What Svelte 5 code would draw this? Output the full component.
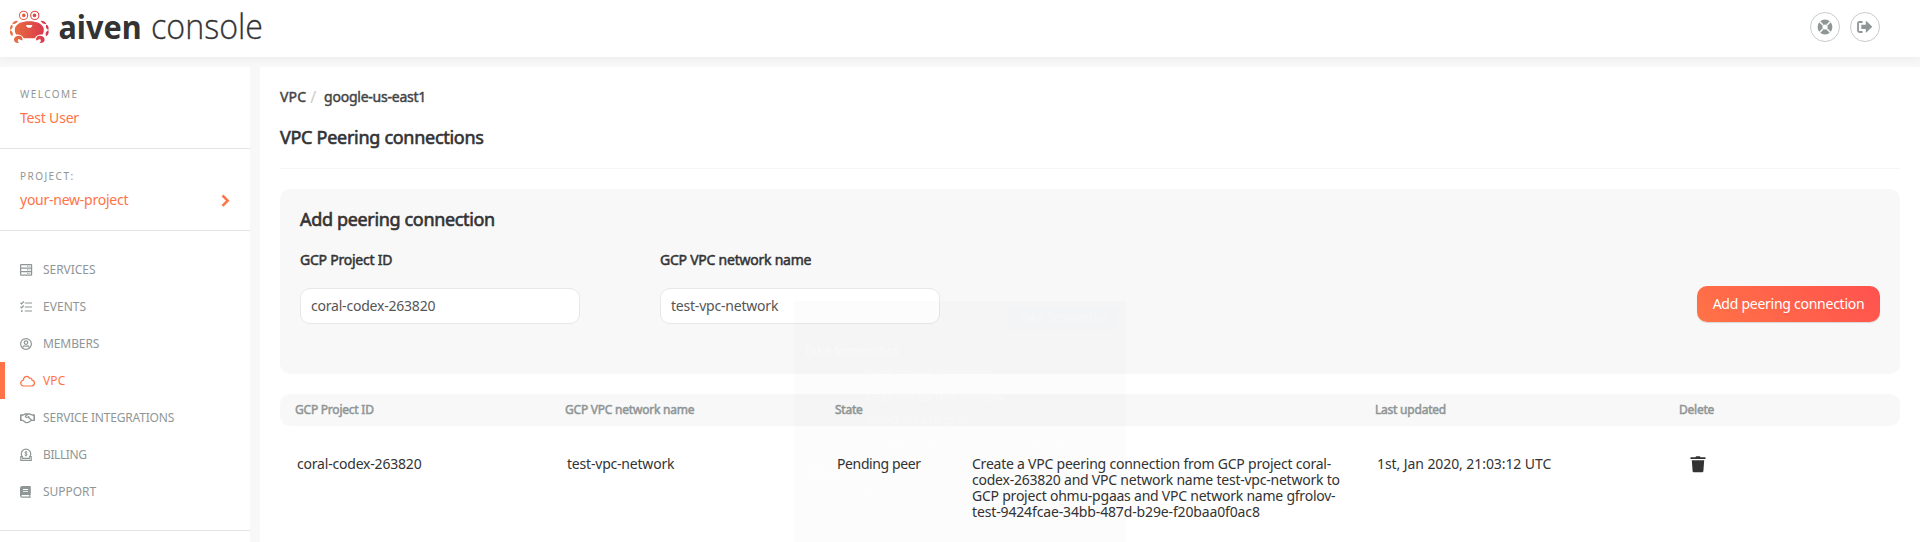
<script>
  const nav = [
    { icon: 'services', label: 'SERVICES', tracking: -0.05 },
    { icon: 'events', label: 'EVENTS', tracking: 0.05 },
    { icon: 'members', label: 'MEMBERS', tracking: -0.1 },
    { icon: 'vpc', label: 'VPC', tracking: 0.1, active: true },
    { icon: 'integrations', label: 'SERVICE INTEGRATIONS', tracking: -0.18 },
    { icon: 'billing', label: 'BILLING', tracking: -0.4 },
    { icon: 'support', label: 'SUPPORT', tracking: -0.05 }
  ];
  let projectId = $state('coral-codex-263820');
  let network = $state('test-vpc-network');
</script>

<div class="page">
  <header>
    <svg class="logo" width="300" height="57" viewBox="0 0 300 57">
      <defs>
        <linearGradient id="crab" x1="10" y1="0" x2="49" y2="0" gradientUnits="userSpaceOnUse">
          <stop offset="0" stop-color="#e8743f" />
          <stop offset="1" stop-color="#d9304f" />
        </linearGradient>
      </defs>
      <g fill="none" stroke="url(#crab)">
        <circle cx="23.6" cy="15.4" r="4.100" stroke-width="1.100" />
        <circle cx="34.8" cy="15.4" r="4.100" stroke-width="1.100" />
      </g>
      <g fill="url(#crab)">
        <circle cx="23.8" cy="15.4" r="1.800" />
        <circle cx="34.5" cy="15.4" r="1.800" />
        <path d="M15 28C17 23.300 22 21.300 29.300 21.300S41.600 23.300 43.600 28C44.100 31 43.600 33.200 42.100 34.700C39 34.300 36.300 35.500 34.800 38.200H23.800C22.200 35.500 19.500 34.300 16.500 34.700C15 33.200 14.500 31 15 28Z" />
        <path d="M18 20.800C15.600 20.400 13.400 21.500 12.300 23.900C14.600 24.500 17 23.200 18 20.800ZM12.300 24.500C10.500 25.400 9.600 27.300 10.200 29.900C12.400 29 13.300 26.700 12.300 24.500ZM10.300 30.300C9.300 32.500 10.200 35 12.400 36.200C13.600 34 12.500 31.300 10.300 30.300ZM40.600 20.800C43 20.400 45.200 21.500 46.300 23.900C44 24.500 41.600 23.200 40.600 20.800ZM46.300 24.500C48.100 25.400 49 27.300 48.400 29.900C46.200 29 45.300 26.700 46.300 24.500ZM48.300 30.300C49.300 32.500 48.400 35 46.200 36.200C45 34 46.100 31.300 48.300 30.300Z" />
        <path d="M19.500 35.700C15.500 35.100 13.400 38.300 14.200 40.800C14.900 42.700 17 43.400 19.200 42.900C17.400 41.800 17.300 40 18.500 38.900L22.300 40.500C23.100 38.300 21.700 36.100 19.500 35.700ZM39.100 35.700C43.100 35.100 45.200 38.300 44.400 40.800C43.700 42.700 41.600 43.400 39.400 42.900C41.200 41.800 41.300 40 40.100 38.900L36.300 40.500C35.500 38.300 36.900 36.100 39.100 35.700Z" />
      </g>
      <path d="M26 24.900H32.400C32 28.700 26.400 28.700 26 24.900Z" fill="#fff" />
      <text class="brand" x="58.500" y="38.500" textLength="83" lengthAdjust="spacingAndGlyphs">aiven</text>
      <text class="product" x="151" y="38.500" textLength="112" lengthAdjust="spacingAndGlyphs">console</text>
    </svg>
    <div class="actions">
      <button class="round" aria-label="Help">
        <svg width="16" height="16" viewBox="0 0 16 16">
          <circle cx="8" cy="8" r="5" fill="none" stroke="#8f9696" stroke-width="4.800" />
          <path d="M3 3L5.700 5.700M13 3L10.300 5.700M3 13L5.700 10.300M13 13L10.300 10.300" stroke="#fff" stroke-width="1.500" stroke-linecap="round" />
        </svg>
      </button>
      <button class="round" aria-label="Sign out">
        <svg width="16" height="14" viewBox="0 0 16 14">
          <path d="M5.500 2H2.500Q1 2 1 3.500V10.500Q1 12 2.500 12H5.500" fill="none" stroke="#8f9696" stroke-width="1.800" />
          <path d="M4.300 4.800H8.800V1.200Q9.100.9 9.600 1.200L15.300 6.700L9.600 12.200Q9.100 12.600 8.800 12.200V9H4.300Z" fill="#8f9696" />
        </svg>
      </button>
    </div>
  </header>

  <div class="body">
    <aside>
      <section>
        <div class="eyebrow">WELCOME</div>
        <a class="link" href="#user">Test User</a>
      </section>
      <section>
        <div class="eyebrow">PROJECT:</div>
        <a class="link row" href="#project">
          <span class="projname">your-new-project</span>
          <svg width="9" height="13" viewBox="0 0 9 13"><path d="M1.500 1.500L6.700 6.700L1.500 11.900" fill="none" stroke="#ff7346" stroke-width="2.500" /></svg>
        </a>
      </section>
      <nav>
        {#each nav as item}
          <a class="item" class:active={item.active} href="#{item.icon}">
            <svg class="ico" width="16" height="14" viewBox="0 0 16 14" fill="none" stroke="currentColor" stroke-width="1.200">
              {#if item.icon === 'services'}
                <rect x=".6" y="1.600" width="11" height="10.600" rx=".5" />
                <path d="M.6 5.100H11.600M.6 8.700H11.600" />
                <path d="M7 3.400H10.500M7 6.900H10.500M7 10.400H10.500" stroke-dasharray="1 .6" opacity=".75" />
              {:else if item.icon === 'events'}
                <path d="M4.800 3H12M4.800 7H12M4.800 11H12M.5 2.800L1.600 3.800L3.800 1.500M.5 6.800L1.600 7.800L3.800 5.500" />
                <circle cx="1.800" cy="11" r=".9" fill="currentColor" stroke="none" />
              {:else if item.icon === 'members'}
                <circle cx="6" cy="7" r="5.400" /><circle cx="6" cy="5.600" r="1.800" />
                <path d="M2.500 10.800C3.200 9 4.500 8.700 6 9.200C7.500 8.700 8.800 9 9.500 10.800" />
              {:else if item.icon === 'vpc'}
                <path d="M3.800 12H11.500C15.500 11.500 15.300 6.800 12 6.200C11.900 4.300 10.600 3.800 9.500 4.300C7.800 1.100 3.300 2.300 3.500 6C-.3 7-.2 11.700 3.800 12Z" />
              {:else if item.icon === 'integrations'}
                <path d="M.8 3.600V9.900M14.200 3.600V9.900" stroke-width="1.600" />
                <path d="M1 4H3L5.200 3H9.600L12.400 4H14M1 9.300H2.700L5.600 11.300Q7.500 12 9 11L11.500 9.300H14M8 3L5.400 5.200Q5.600 7.100 8 6L11.800 9.200M8.100 6.100L9.200 5.200" stroke-width="1.300" />
              {:else if item.icon === 'billing'}
                <path d="M3 9.500A4.700 4.700 0 1 1 9 9.500M2.200 8.700H.8V12.300H11.200V8.700H9.800M2 10.300H10" />
                <path d="M7.400 4.300Q6 3.300 4.900 4.300C4.200 5.900 7.700 5.300 7.200 7Q5.900 8.100 4.600 7M6 3V8.400" stroke-width=".9" />
              {:else}
                <path fill="currentColor" stroke="none" fill-rule="evenodd" d="M2.200 1H10Q10.800 1 10.800 1.800V9.300Q10.800 9.800 10.400 10V11.700Q10.800 11.900 10.800 12.300Q10.800 12.800 10.300 12.800H2.200Q0 12.800 0 10.600V3.200Q0 1 2.200 1ZM3 4V4.900H8V4ZM3 5.900V6.700H8V5.900ZM2.200 10.100Q1.500 10.300 1.500 10.900T2.200 11.600H9.200V10.100Z" />
              {/if}
            </svg>
            <span style="letter-spacing: {item.tracking}px">{item.label}</span>
          </a>
        {/each}
      </nav>
    </aside>

    <main>
      <div class="crumbs"><a class="root" href="#vpc">VPC</a><i>/</i><a class="current" href="#region">google-us-east1</a></div>
      <h1>VPC Peering connections</h1>
      <form class="card">
        <h2>Add peering connection</h2>
        <div class="fields">
          <label><span>GCP Project ID</span><input bind:value={projectId} /></label>
          <label><span>GCP VPC network name</span><input bind:value={network} /></label>
          <button type="button" class="primary">Add peering connection</button>
        </div>
      </form>
      <div class="cols head">
        <span>GCP Project ID</span><span>GCP VPC network name</span><span>State</span><span></span><span>Last updated</span><span>Delete</span>
      </div>
      <div class="cols data">
        <span>coral-codex-263820</span>
        <span>test-vpc-network</span>
        <span class="state">Pending peer</span>
        <span class="desc">Create a VPC peering connection from GCP project coral-<br />codex-263820 and VPC network name test-vpc-network to<br />GCP project ohmu-pgaas and VPC network name gfrolov-<br /><span class="hash">test-9424fcae-34bb-487d-b29e-f20baa0f0ac8</span></span>
        <span class="date">1st, Jan 2020, 21:03:12 UTC</span>
        <span class="trash">
          <svg width="16" height="17" viewBox="0 0 16 17" fill="#333"><path d="M.5 1.300H5.500Q5.700.2 6.500.2H9.500Q10.300.2 10.500 1.300H15.500V3H.5ZM1.800 4.200H14.200L13.400 15Q13.300 16.200 12.200 16.200H3.800Q2.700 16.200 2.600 15Z" /></svg>
        </span>
      </div>
    </main>
  </div>

  <div class="ghost" aria-hidden="true">
    <div class="take">Take Screenshot</div>
    <b>Take Screenshot</b>
    <p class="opt">Grab the whole screen</p>
    <p class="opt">Grab the current window</p>
    <p class="opt">Select area to grab</p>
    <p class="delay"><span>Grab after a delay of</span><span>0</span><span class="step">−</span><span>+</span><span>seconds</span></p>
    <b class="effects">Effects</b>
    <p class="include">Include pointer</p>
  </div>
</div>

<style>
  :global(body) { margin: 0; overflow: hidden; }
  .page {
    position: relative; width: 1920px; height: 542px; overflow: hidden;
    display: flex; flex-direction: column; background: #f8f8f8; color: #333;
    font: 14px/16px "Noto Sans", "Open Sans", sans-serif; letter-spacing: -.2px;
  }
  .page * { box-sizing: border-box; }
  a { color: inherit; text-decoration: none; }
  header { height: 57px; flex: none; background: #fff; display: flex; justify-content: space-between; box-shadow: 0 0 10px rgba(0, 0, 0, .07); }
  .logo { overflow: visible; }
  .brand { font-size: 33px; font-weight: 700; fill: #333; letter-spacing: 0; }
  .product { font-family: "Open Sans", "Noto Sans", sans-serif; font-size: 35px; font-weight: 300; fill: #333; letter-spacing: 0; stroke: #333; stroke-width: .3px; }
  .actions { display: flex; gap: 10px; padding: 12px 40px 0 0; }
  .round { width: 30px; height: 30px; padding: 0; border: 1px solid #c9cccc; border-radius: 50%; background: #fff; display: flex; align-items: center; justify-content: center; }
  .body { flex: 1; min-height: 0; margin-top: 10px; display: flex; gap: 10px; }
  aside { width: 250px; flex: none; background: #fff; }
  section { height: 82px; padding: 20px 20px 0; border-bottom: 1px solid #e3e5e5; }
  .eyebrow { font-size: 10px; line-height: 15px; letter-spacing: 1.450px; color: #8f9696; }
  .link { display: block; margin-top: 7px; line-height: 18px; color: #ff7346; }
  .row { display: flex; justify-content: space-between; align-items: center; }
  .projname { letter-spacing: -.25px; }
  nav { padding: 20px 0; border-bottom: 1px solid #e3e5e5; }
  .item { height: 37px; padding-left: 15px; border-left: 5px solid transparent; display: flex; align-items: center; gap: 7px; font-size: 12px; color: #8f9696; }
  .item.active { border-left-color: #ff7346; color: #ff7346; }
  .ico { flex: none; }

  main { flex: 1; background: #fff; padding: 20px 20px 0; }
  .crumbs { height: 20px; line-height: 20px; display: flex; color: #444; -webkit-text-stroke: .45px #444; }
  .crumbs .root { letter-spacing: .2px; }
  .crumbs i { font-style: normal; color: #ccc; -webkit-text-stroke: 0; margin: 0 8px 0 4px; font-size: 16px; }
  .crumbs .current { letter-spacing: -.24px; }
  h1, h2 { margin: 0; font-size: 18px; font-weight: 400; letter-spacing: -.29px; -webkit-text-stroke: .6px #333; }
  h1 { height: 62px; padding-top: 18px; line-height: 24px; border-bottom: 1px solid #f5f5f5; }
  .card { height: 185px; margin: 20px 0; padding: 18px 20px 0; border-radius: 10px; background: #f8f8f8; }
  h2 { line-height: 24px; letter-spacing: -.34px; }
  .fields { display: flex; gap: 80px; margin-top: 20px; }
  label { width: 280px; display: flex; flex-direction: column; gap: 19px; letter-spacing: -.24px; }
  label span { line-height: 18px; -webkit-text-stroke: .5px #333; }
  input { height: 36px; padding: 0 10px 1px; border: 1px solid #e8e8e8; border-radius: 10px; background: #fff; color: #555; font: inherit; letter-spacing: -.21px; }
  .primary { width: 183px; height: 36px; margin: 35px 0 0 auto; padding: 0; border: 0; border-radius: 10px; color: #fff; font: inherit; letter-spacing: -.26px; background: linear-gradient(45deg, #ff7346, #ff524f); box-shadow: 0 1px 1px rgba(0, 0, 0, .14); }
  .cols { display: grid; grid-template-columns: 270px 270px 135px 405px 304px 1fr; }
  .head { height: 32px; padding-left: 15px; align-items: center; border-radius: 10px; background: #f8f8f8; color: #8f9696; font-size: 12px; letter-spacing: -.22px; -webkit-text-stroke: .5px #8f9696; }
  .data { padding: 30px 0 0 17px; }
  .state { letter-spacing: -.38px; }
  .desc { letter-spacing: -.23px; white-space: nowrap; }
  .hash { letter-spacing: -.14px; }
  .date { letter-spacing: -.08px; }
  .trash { padding-left: 9px; }

  .ghost { position: absolute; left: 794px; top: 301px; width: 332px; height: 241px; padding: 6px 8px 0 10px; background: rgba(0, 0, 0, .013); color: rgba(255, 255, 255, .35); font-size: 12px; line-height: 16px; pointer-events: none; }
  .take { width: 109px; height: 23px; margin-left: auto; line-height: 22px; text-align: center; background: rgba(225, 240, 255, .12); }
  .ghost b { display: block; margin-top: 13px; }
  .ghost p { margin: 7px 0 0; }
  .ghost .opt { padding-left: 63px; }
  .delay { display: flex; gap: 12px; padding-left: 47px; }
  .step { margin-left: 22px; }
  .ghost .include { padding-left: 26px; margin-top: 6px; }
</style>
